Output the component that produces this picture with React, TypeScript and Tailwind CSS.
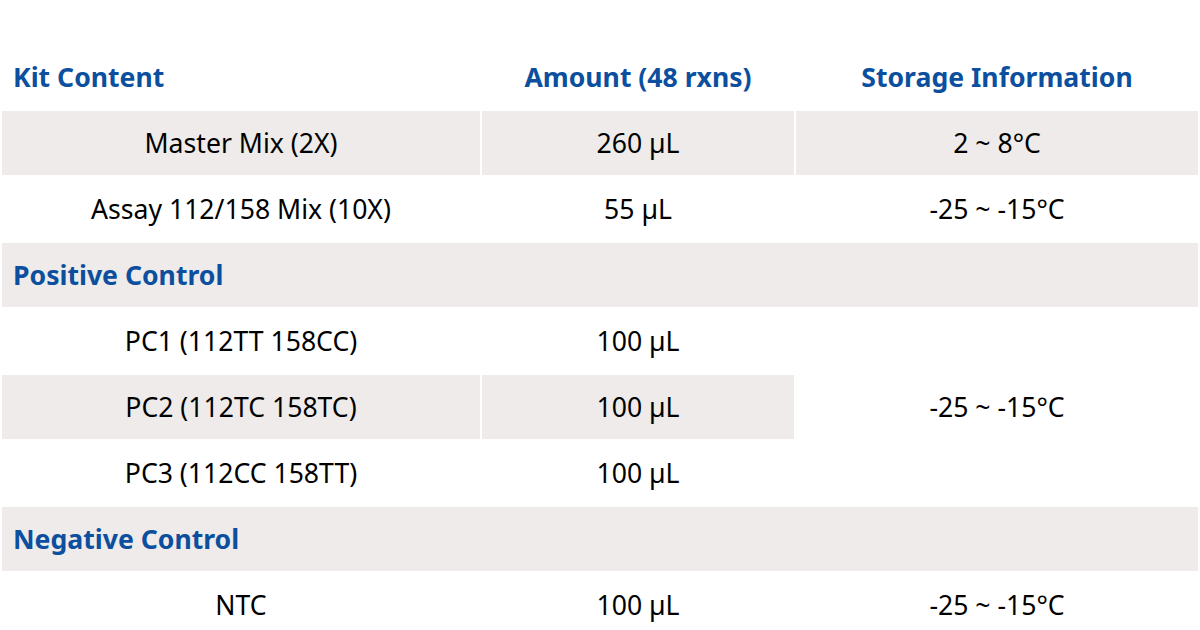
import React from "react";

const shade = "bg-[#eeebea]";
const blue = "text-[#0b4f9e]";

export default function App() {
  const cell = "h-[64px] p-0 text-center align-middle text-[26.6px] leading-none text-black";
  const head = `h-[64px] p-0 align-middle text-[26.6px] leading-none font-bold ${blue}`;
  return (
    <div className="w-[1200px] h-[630px] overflow-hidden bg-white pt-[43px]" style={{ fontFamily: '"Noto Sans", "Open Sans", sans-serif' }}>
      <table className="w-[1200px] table-fixed border-separate border-spacing-[2px]">
        <colgroup>
          <col className="w-[478px]" />
          <col className="w-[312px]" />
          <col className="w-[402px]" />
        </colgroup>
        <tbody>
          <tr>
            <td className={`${head} pl-[11px] text-left`}>Kit Content</td>
            <td className={`${head} text-center`}>Amount (48 rxns)</td>
            <td className={`${head} text-center`}>Storage Information</td>
          </tr>
          <tr>
            <td className={`${cell} ${shade}`}>Master Mix (2X)</td>
            <td className={`${cell} ${shade}`}>260 µL</td>
            <td className={`${cell} ${shade}`}>2 ~ 8°C</td>
          </tr>
          <tr>
            <td className={cell}>Assay 112/158 Mix (10X)</td>
            <td className={cell}>55 µL</td>
            <td className={cell}>-25 ~ -15°C</td>
          </tr>
          <tr>
            <td colSpan={3} className={`${head} ${shade} pl-[11px] text-left`}>Positive Control</td>
          </tr>
          <tr>
            <td className={cell}>PC1 (112TT 158CC)</td>
            <td className={cell}>100 µL</td>
            <td rowSpan={3} className={cell}>-25 ~ -15°C</td>
          </tr>
          <tr>
            <td className={`${cell} ${shade}`}>PC2 (112TC 158TC)</td>
            <td className={`${cell} ${shade}`}>100 µL</td>
          </tr>
          <tr>
            <td className={cell}>PC3 (112CC 158TT)</td>
            <td className={cell}>100 µL</td>
          </tr>
          <tr>
            <td colSpan={3} className={`${head} ${shade} pl-[11px] text-left`}>Negative Control</td>
          </tr>
          <tr>
            <td className={cell}>NTC</td>
            <td className={cell}>100 µL</td>
            <td className={cell}>-25 ~ -15°C</td>
          </tr>
        </tbody>
      </table>
    </div>
  );
}
